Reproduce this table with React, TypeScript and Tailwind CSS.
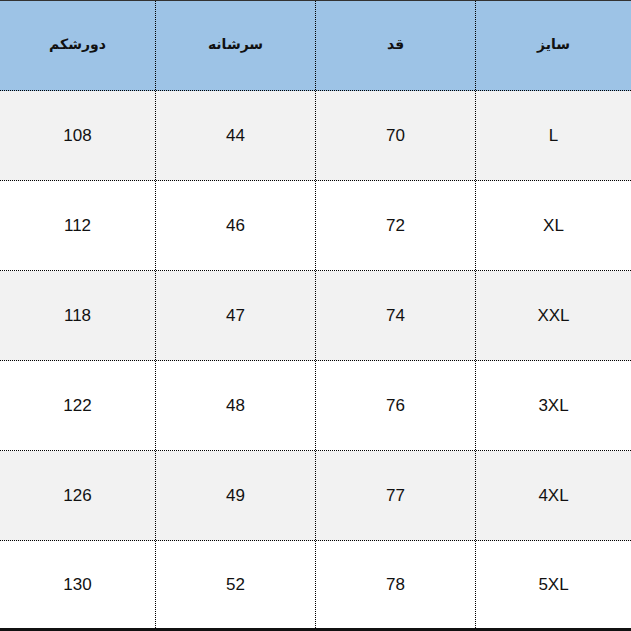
import React from 'react';

const header = ['سایز', 'قد', 'سرشانه', 'دورشکم'];

const rows = [
  ['L', '70', '44', '108'],
  ['XL', '72', '46', '112'],
  ['XXL', '74', '47', '118'],
  ['3XL', '76', '48', '122'],
  ['4XL', '77', '49', '126'],
  ['5XL', '78', '52', '130'],
];

const cols = 'grid grid-cols-[156px_160px_160px_155px]';

const App: React.FC = () => {
  return (
    <div
      dir="rtl"
      className="w-[631px] h-[631px] bg-white overflow-hidden border-t border-[#333]"
      style={{ fontFamily: '"Liberation Sans", "DejaVu Sans", sans-serif' }}
    >
      <div className={`${cols} h-[90px] bg-[#9dc3e6] border-b border-dotted border-black`}>
        {header.map((h, i) => (
          <div
            key={i}
            className={`flex items-center justify-center pb-[2px] text-[14px] font-bold text-[#111] ${i < 3 ? 'border-l border-dotted border-black' : ''}`}
            style={{ fontFamily: '"DejaVu Sans", sans-serif' }}
          >
            {h}
          </div>
        ))}
      </div>
      {rows.map((r, ri) => (
        <div
          key={ri}
          className={`${cols} h-[90px] ${ri % 2 === 0 ? 'bg-[#f2f2f2]' : 'bg-white'} ${ri < 5 ? 'border-b border-dotted border-black' : 'border-b-[3px] border-solid border-[#111]'}`}
        >
          {r.map((c, ci) => (
            <div
              key={ci}
              className={`flex items-center justify-center text-[17px] text-[#111] ${ci < 3 ? 'border-l border-dotted border-black' : ''}`}
            >
              {c}
            </div>
          ))}
        </div>
      ))}
    </div>
  );
};

export default App;
